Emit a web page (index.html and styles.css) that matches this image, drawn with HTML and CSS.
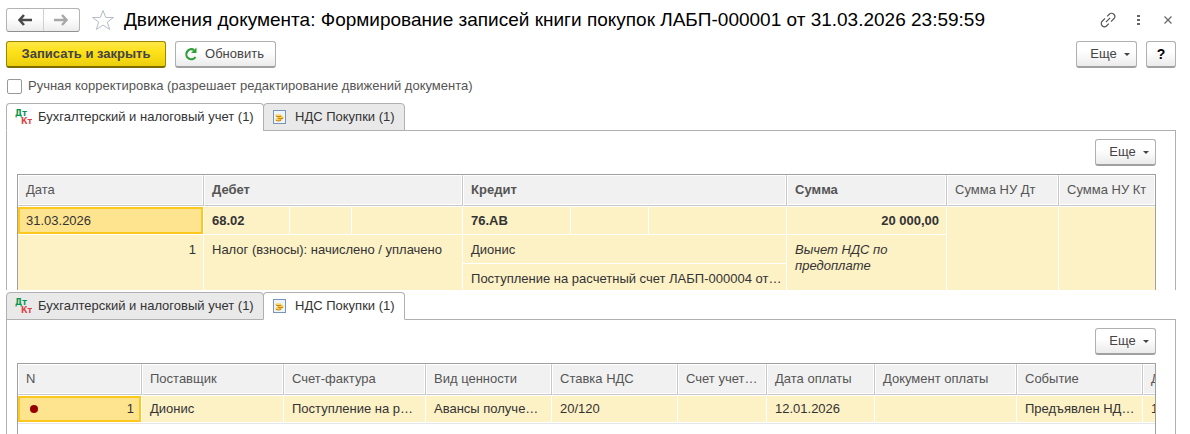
FILE: index.html
```
<!DOCTYPE html>
<html lang="ru">
<head>
    <meta charset="UTF-8">
    <meta name="viewport" content="width=device-width, initial-scale=1.0">
    <title>Движения документа</title>
    <link rel="stylesheet" href="styles.css">
</head>
<body>

    <!-- Общие иконки -->
    <svg class="sprite" aria-hidden="true">
        <symbol id="icoCoins" viewBox="0 0 14 15">
            <rect x="0.5" y="0.5" width="12" height="13" fill="#edf5fb" stroke="#7896b4"/>
            <ellipse cx="5.500" cy="10" rx="3" ry="1.400" fill="#c9800a"/>
            <ellipse cx="5.500" cy="9.300" rx="3" ry="1.100" fill="#ffd95a"/>
            <ellipse cx="7.500" cy="8" rx="3" ry="1.400" fill="#c9800a"/>
            <ellipse cx="7.500" cy="7.200" rx="3" ry="1.100" fill="#ffd03c"/>
            <ellipse cx="5.500" cy="5.800" rx="3" ry="1.400" fill="#c9800a"/>
            <ellipse cx="5.500" cy="5" rx="3" ry="1.100" fill="#ffe27a"/>
        </symbol>
    </svg>

    <!-- Заголовок -->
    <header class="header">
        <div class="nav">
            <button class="nav-btn" aria-label="Назад">
                <svg width="14" height="12" viewBox="0 0 14 12"><path d="M6 1L1.500 6L6 11M2 6H14" fill="none" stroke="#4a4a4a" stroke-width="2.600"/></svg>
            </button>
            <button class="nav-btn" aria-label="Вперед">
                <svg width="14" height="12" viewBox="0 0 14 12"><path d="M8 1L12.500 6L8 11M12 6H0" fill="none" stroke="#a8a8a8" stroke-width="2.400"/></svg>
            </button>
        </div>
        <button class="icon-btn star" aria-label="В избранное">
            <svg width="24" height="22" viewBox="0 0 24 22"><path d="M12 1.500L14.700 8.400L22.500 8.500L16.300 13.100L18.700 20.500L12 16.100L5.300 20.500L7.700 13.100L1.500 8.500L9.300 8.400Z" fill="none" stroke="#b4bcc6"/></svg>
        </button>
        <h1 class="title">Движения документа: Формирование записей книги покупок ЛАБП-000001 от 31.03.2026 23:59:59</h1>
        <div class="window-btns">
            <button class="icon-btn" aria-label="Ссылка">
                <svg width="16" height="16" viewBox="0 0 16 16"><g transform="rotate(-45 8 8)" fill="none" stroke="#555" stroke-width="1.200"><path d="M7 4.800H3A3.200 3.200 0 0 0 3 11.200H6"/><path d="M9 11.200H13A3.200 3.200 0 0 0 13 4.800H10"/><path d="M5 8H11"/></g></svg>
            </button>
            <button class="icon-btn" aria-label="Меню">
                <svg width="16" height="16" viewBox="0 0 16 16"><path d="M7 3h3v2h-3zM7 7h3v2h-3zM7 11h3v2h-3z" fill="#666"/></svg>
            </button>
            <button class="icon-btn" aria-label="Закрыть">
                <svg width="16" height="16" viewBox="0 0 16 16"><path d="M4.500 4.500l7 7M11.500 4.500l-7 7" stroke="#666" stroke-width="1.200"/></svg>
            </button>
        </div>
    </header>

    <!-- Командная панель -->
    <div class="toolbar">
        <button class="btn btn-main">Записать и закрыть</button>
        <button class="btn btn-refresh">
            <svg width="14" height="14" viewBox="0 0 14 14"><path d="M11.500 10A5 5 0 1 1 10 3" fill="none" stroke="#2f9e38" stroke-width="2.200"/><path d="M7 6H12.500V0.500Z" fill="#2f9e38"/></svg>
            Обновить
        </button>
        <button class="btn btn-more push">Еще</button>
        <button class="btn btn-help">?</button>
    </div>

    <label class="manual">
        <input type="checkbox" class="check">
        Ручная корректировка (разрешает редактирование движений документа)
    </label>

    <!-- Бухгалтерский и налоговый учет -->
    <section>
        <div class="tabs">
            <button class="tab tab-account active"><svg width="17" height="18" viewBox="0 0 17 18"><text x="0" y="8" class="dt">Дт</text><text x="6" y="16" class="kt">Кт</text></svg>Бухгалтерский и налоговый учет (1)</button>
            <button class="tab tab-vat"><svg width="14" height="15"><use href="#icoCoins"/></svg>НДС Покупки (1)</button>
        </div>
        <div class="panel">
            <div class="panel-bar">
                <button class="btn btn-more">Еще</button>
            </div>
            <div class="table-box">
                <table class="entries">
                    <colgroup>
                        <col class="w-date">
                        <col class="w-dt1"><col class="w-dt2"><col class="w-dt3">
                        <col class="w-kt1"><col class="w-kt2"><col class="w-kt3">
                        <col class="w-sum"><col class="w-nu"><col>
                    </colgroup>
                    <thead>
                        <tr>
                            <th>Дата</th>
                            <th class="bold" colspan="3">Дебет</th>
                            <th class="bold" colspan="3">Кредит</th>
                            <th class="bold">Сумма</th>
                            <th>Сумма НУ Дт</th>
                            <th>Сумма НУ Кт</th>
                        </tr>
                    </thead>
                    <tbody>
                        <tr>
                            <td class="selected">31.03.2026</td>
                            <td class="bold">68.02</td>
                            <td></td>
                            <td></td>
                            <td class="bold">76.АВ</td>
                            <td></td>
                            <td></td>
                            <td class="bold num">20 000,00</td>
                            <td rowspan="3"></td>
                            <td rowspan="3"></td>
                        </tr>
                        <tr>
                            <td class="num top" rowspan="2">1</td>
                            <td class="top" rowspan="2" colspan="3">Налог (взносы): начислено / уплачено</td>
                            <td class="top" colspan="3">Дионис</td>
                            <td class="top note" rowspan="2">Вычет НДС по предоплате</td>
                        </tr>
                        <tr>
                            <td class="top" colspan="3">Поступление на расчетный счет ЛАБП-000004 от…</td>
                        </tr>
                    </tbody>
                </table>
            </div>
        </div>
    </section>

    <!-- НДС Покупки -->
    <section class="vat">
        <div class="tabs">
            <button class="tab tab-account"><svg width="17" height="18" viewBox="0 0 17 18"><text x="0" y="8" class="dt">Дт</text><text x="6" y="16" class="kt">Кт</text></svg>Бухгалтерский и налоговый учет (1)</button>
            <button class="tab tab-vat active"><svg width="14" height="15"><use href="#icoCoins"/></svg>НДС Покупки (1)</button>
        </div>
        <div class="panel">
            <div class="panel-bar">
                <button class="btn btn-more">Еще</button>
            </div>
            <div class="table-box">
                <table class="purchases">
                    <colgroup>
                        <col class="w-n"><col class="w-l"><col class="w-l"><col class="w-m"><col class="w-m">
                        <col class="w-acc"><col class="w-pay"><col class="w-l"><col class="w-m"><col class="w-m">
                    </colgroup>
                    <thead>
                        <tr>
                            <th>N</th>
                            <th>Поставщик</th>
                            <th>Счет-фактура</th>
                            <th>Вид ценности</th>
                            <th>Ставка НДС</th>
                            <th>Счет учет…</th>
                            <th>Дата оплаты</th>
                            <th>Документ оплаты</th>
                            <th>Событие</th>
                            <th>Д</th>
                        </tr>
                    </thead>
                    <tbody>
                        <tr>
                            <td class="selected"><div class="row-num"><span class="dot"></span>1</div></td>
                            <td>Дионис</td>
                            <td>Поступление на р…</td>
                            <td>Авансы получе…</td>
                            <td>20/120</td>
                            <td></td>
                            <td>12.01.2026</td>
                            <td></td>
                            <td>Предъявлен НД…</td>
                            <td>1</td>
                        </tr>
                    </tbody>
                </table>
            </div>
        </div>
    </section>

</body>
</html>
```
FILE: styles.css
```
* { box-sizing:border-box; }

html, body { height:100%; }

body {
    margin:0;
    padding:8px 14px 0 6px;
    display:flex;
    flex-direction:column;
    overflow:hidden;
    background:#fff;
    color:#333;
    font:13px/16px "Liberation Sans", Arial, sans-serif;
}

button {
    font:inherit;
    color:inherit;
    padding:0;
    cursor:pointer;
}

.sprite {
    position:absolute;
    width:0;
    height:0;
}

.dt, .kt { font:bold 8px "DejaVu Sans", Verdana, sans-serif; }
.dt { fill:#0a9648; }
.kt { fill:#dc4646; }

/* ---------- ЗАГОЛОВОК ---------- */
.header {
    display:flex;
    align-items:center;
    height:24px;
}

.nav {
    display:flex;
    width:74px;
    height:24px;
    border:1px solid #b4b4b4;
    border-bottom-color:#909090;
    border-radius:3px;
    background:linear-gradient(#fff 40%, #ececec);
}

.nav-btn {
    flex:1;
    display:flex;
    align-items:center;
    justify-content:center;
    border:0;
    background:none;
}

.nav-btn + .nav-btn { border-left:1px solid #d0d0d0; }

.icon-btn {
    display:flex;
    border:0;
    background:none;
}

.star { margin:0 9px 0 11px; }

.title {
    margin:0;
    font-size:19px;
    line-height:24px;
    font-weight:400;
    color:#000;
    white-space:nowrap;
}

.window-btns {
    display:flex;
    gap:14px;
    margin-left:auto;
}

/* ---------- КНОПКИ ---------- */
.toolbar {
    display:flex;
    margin-top:9px;
}

.btn {
    display:flex;
    align-items:center;
    justify-content:center;
    height:27px;
    border:1px solid #b0b0b0;
    border-bottom:2px solid #a0a0a0;
    border-radius:3px;
    background:linear-gradient(#fff 40%, #ebebeb);
    color:#444;
}

.btn-main {
    width:160px;
    border-color:#9c8600;
    border-bottom-color:#7d6c00;
    background:linear-gradient(#ffe84a, #ffe11a 40%, #eccf0c);
    font-weight:700;
}

.btn-refresh {
    width:101px;
    margin-left:9px;
    padding-right:3px;
    gap:7px;
}

.btn-more {
    width:61px;
    gap:7px;
    padding-left:7px;
}

.btn-more::after {
    content:"";
    border:3px solid transparent;
    border-top-color:#444;
    border-bottom:0;
}

.btn-help {
    width:30px;
    margin-left:9px;
    color:#000;
    font-size:14px;
    font-weight:700;
}

.push { margin-left:auto; }

.manual {
    display:flex;
    align-items:center;
    gap:6px;
    height:16px;
    margin:10px 0 9px 1px;
    color:#555;
}

.check {
    appearance:none;
    width:15px;
    height:15px;
    margin:0;
    border:1px solid #999;
    border-radius:2px;
    background:#fff;
}

/* ---------- ЗАКЛАДКИ ---------- */
.tabs {
    display:flex;
    margin-bottom:-1px;
}

.tab {
    position:relative;
    display:flex;
    align-items:center;
    height:28px;
    padding-left:8px;
    border:1px solid #b0b0b0;
    border-radius:4px 4px 0 0;
    background:#e9e9e9;
    white-space:nowrap;
}

.tab.active {
    background:#fff;
    border-bottom-color:#fff;
}

.tab-account {
    width:258px;
    gap:6px;
}

.tab-vat {
    width:142px;
    margin-left:-1px;
    padding-left:9px;
    gap:8px;
}

.panel {
    padding:8px 19px 0 10px;
    border:1px solid #b0b0b0;
    border-bottom:0;
}

.panel-bar {
    display:flex;
    justify-content:flex-end;
    margin-bottom:8px;
}

.vat {
    flex:1;
    display:flex;
    flex-direction:column;
    margin-top:2px;
}

.vat .panel {
    flex:1;
    display:flex;
    flex-direction:column;
}

.vat .table-box { flex:1; }

/* ---------- ТАБЛИЦЫ ---------- */
.table-box {
    overflow:hidden;
    border:1px solid #a0a0a0;
    border-bottom:0;
}

table {
    width:100%;
    table-layout:fixed;
    border-collapse:separate;
    border-spacing:0;
}

th {
    height:31px;
    padding:0 7px 2px;
    border:1px solid #fff;
    border-right-color:#c8c8c8;
    border-bottom-color:#c8c8c8;
    background:#f1f1f1;
    box-shadow:inset -1px -1px #fff;
    color:#555;
    font-weight:400;
    text-align:left;
    white-space:nowrap;
}

td {
    height:29px;
    padding:0 7px 0 8px;
    border-right:1px solid #fff;
    border-bottom:1px solid #fff;
    background:#fdf1c6;
    white-space:nowrap;
}

tbody tr:first-child td { border-top:1px solid #fff; }
th:last-child, tbody tr:first-child td:last-child { border-right:0; }

.entries tr:last-child td {
    height:26px;
    border-bottom:0;
}
.entries tbody td[rowspan] { border-bottom:0; }

.bold { font-weight:700; }
.num { text-align:right; }

.top {
    padding-top:7px;
    vertical-align:top;
}

.note {
    font-style:italic;
    white-space:normal;
}

.selected {
    background:#ffe48f;
    box-shadow:inset 0 0 0 2px #fcc81e;
}

.row-num {
    display:flex;
    align-items:center;
    justify-content:space-between;
    padding-left:4px;
}

.dot {
    width:8px;
    height:8px;
    border-radius:50%;
    background:#960000;
}

/* ширина колонок */
.w-date { width:186px; }
.w-dt1 { width:86px; }
.w-dt2 { width:62px; }
.w-dt3 { width:111px; }
.w-kt1 { width:108px; }
.w-kt2 { width:78px; }
.w-kt3 { width:138px; }
.w-sum { width:160px; }
.w-nu { width:112px; }

.purchases { width:1251px; }
.purchases tbody td { height:28px; box-shadow:0 1px #e6e6e6; }
.purchases tbody td.selected { box-shadow:inset 0 0 0 2px #fcc81e, 0 1px #e6e6e6; }
.w-n { width:124px; }
.w-l { width:142px; }
.w-m { width:126px; }
.w-acc { width:89px; }
.w-pay { width:108px; }
```
